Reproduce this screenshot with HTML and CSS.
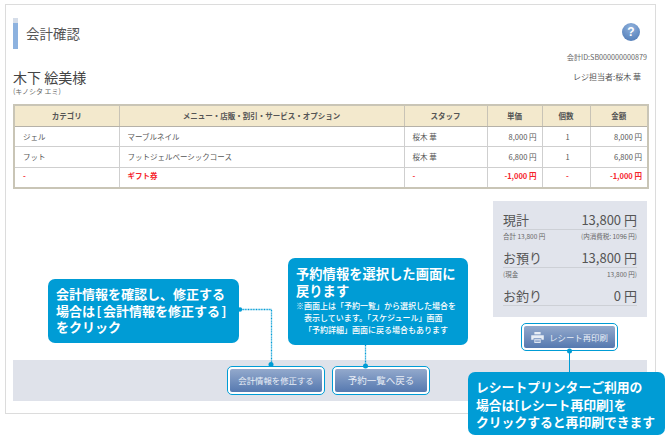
FILE: index.html
```html
<!DOCTYPE html>
<html lang="ja">
<head>
<meta charset="utf-8">
<title>会計確認</title>
<link rel="stylesheet" href="styles.css">
</head>
<body>
<main class="stage">
  <section class="card">
    <header class="head">
      <h1 class="title">会計確認</h1>
      <span class="help">?</span>
    </header>
    <p class="receipt-id">会計ID:SB000000000879</p>
    <div class="customer">
      <div>
        <div class="name">木下 絵美様</div>
        <div class="kana">(キノシタ エミ)</div>
      </div>
      <div class="cashier">レジ担当者:桜木 華</div>
    </div>
    <table class="items">
      <colgroup>
        <col class="c1"><col class="c2"><col class="c3"><col class="c4"><col class="c5"><col class="c6">
      </colgroup>
      <thead>
        <tr><th>カテゴリ</th><th>メニュー・店販・割引・サービス・オプション</th><th>スタッフ</th><th>単価</th><th>個数</th><th>金額</th></tr>
      </thead>
      <tbody>
        <tr><td>ジェル</td><td>マーブルネイル</td><td>桜木 華</td><td class="num">8,000 円</td><td class="mid">1</td><td class="num">8,000 円</td></tr>
        <tr><td>フット</td><td>フットジェルベーシックコース</td><td>桜木 華</td><td class="num">6,800 円</td><td class="mid">1</td><td class="num">6,800 円</td></tr>
        <tr class="red"><td>-</td><td>ギフト券</td><td>-</td><td class="num">-1,000 円</td><td class="mid">-</td><td class="num">-1,000 円</td></tr>
      </tbody>
    </table>
    <aside class="summary">
      <div class="sum-row"><span>現計</span><span>13,800 円</span></div>
      <div class="sum-sub"><span>合計 13,800 円</span><span>(内消費税: 1096 円)</span></div>
      <div class="sum-row"><span>お預り</span><span>13,800 円</span></div>
      <div class="sum-sub"><span>(現金</span><span>13,800 円)</span></div>
      <div class="sum-row last"><span>お釣り</span><span>0 円</span></div>
    </aside>
    <div class="reprint-wrap">
      <span class="ring"><button class="btn btn-print">
        <svg class="printer" viewBox="0 0 16 14" aria-hidden="true"><path d="M4 0h8v3H4z" fill="#e8edf5"/><path d="M0 4h16v6h-3V8H3v2H0z" fill="#e8edf5"/><path d="M4 9h8v5H4z" fill="#e8edf5"/><path d="M5 10.500h6M5 12.200h6" stroke="#5a7db5" stroke-width=".8"/></svg>
        レシート再印刷</button></span>
    </div>
    <footer class="actions">
      <span class="ring"><button class="btn">会計情報を修正する</button></span>
      <span class="ring"><button class="btn btn-wide">予約一覧へ戻る</button></span>
    </footer>
  </section>

  <div class="note note-a">会計情報を確認し、修正する<br>場合は<span class="br">[</span>会計情報を修正する<span class="br">]</span><br>をクリック</div>
  <div class="note note-b">予約情報を選択した画面に<br>戻ります
    <small>※画面上は「予約一覧」から選択した場合を<br><span class="ind">表示しています。「スケジュール」画面</span><br><span class="ind">「予約詳細」画面に戻る場合もあります</span></small>
  </div>
  <div class="note note-c">レシートプリンターご利用の<br>場合は[レシート再印刷]を<br>クリックすると再印刷できます</div>

  <svg class="links" viewBox="0 0 670 438" aria-hidden="true">
    <path d="M240 309.500h31.500V364" fill="none" stroke="#009cd5" stroke-width="1.300" stroke-dasharray="1 .6"/>
    <circle cx="240" cy="309.500" r="2.200" fill="#009cd5"/>
    <circle cx="271" cy="364.500" r="2.500" fill="#009cd5"/>
    <path d="M365.500 345v21" fill="none" stroke="#009cd5" stroke-width="1.300" stroke-dasharray="1 .6"/>
    <circle cx="365.500" cy="366" r="2.500" fill="#009cd5"/>
    <path d="M569.500 351v21" fill="none" stroke="#009cd5"/>
    <circle cx="569.500" cy="351" r="2.500" fill="#009cd5"/>
  </svg>
</main>
</body>
</html>
```
FILE: styles.css
```css
* { box-sizing: border-box; }
html, body { margin: 0; background: #fff; }
body { font-family: "Noto Sans CJK JP", "Liberation Sans", sans-serif; color: #444; }
.stage { position: relative; width: 670px; height: 438px; overflow: hidden; padding: 4px 0 0 5px; }
.card { width: 651px; height: 410px; border: 1px solid #dcdcdc; padding: 13px 8px 0 7px; background: #fff; }
.head { display: flex; justify-content: space-between; align-items: flex-start; height: 31px; }
.title { margin: 0; height: 31px; padding-left: 8px; border-left: 5px solid #8db2df; border-image: linear-gradient(#d5dde9 0 18%, #8db2df 18% 100%) 1; font-size: 13.500px; font-weight: 400; line-height: 31px; color: #555; }
.help { width: 18px; height: 18px; margin: 5px 7px 0 0; border-radius: 50%; background: radial-gradient(circle at 50% 25%, #8fb1dc, #4a76b3); color: #fff; font: 700 12px/18px "Liberation Sans", sans-serif; text-align: center; }
.receipt-id { margin: 2px 0 0; height: 12px; font-size: 7.200px; line-height: 12px; text-align: right; color: #666; }
.customer { display: flex; justify-content: space-between; margin-top: 4px; height: 34px; }
.name { font-size: 14px; line-height: 20px; color: #444; }
.kana { font-size: 7px; line-height: 9px; color: #666; }
.cashier { font-size: 8px; line-height: 12px; padding: 4px 6px 0 0; color: #555; }
.items { width: 634px; height: 85px; margin-top: 3px; border-collapse: collapse; table-layout: fixed; border: 2px solid #c9c5b6; font-size: 7.500px; color: #555; }
.c1 { width: 105px; } .c2 { width: 285px; } .c3 { width: 83px; } .c4 { width: 55px; } .c5 { width: 48px; } .c6 { width: 58px; }
.items th { height: 21px; background: #f3e9cd; border: 1px solid #c8c3b6; border-bottom: 1px solid #b5b1a8; font-weight: 700; color: #555; padding: 0; }
.items td { height: 20px; border: 1px solid #cfcfcf; padding: 0 5px 0 8px; }
.items .num { text-align: right; }
.items .mid { text-align: center; }
.items .red td { color: #f5242c; font-weight: 700; padding-bottom: 3px; }
.summary { margin: 12px 0 0 480px; width: 154px; height: 116px; padding: 10px 10px 0; background: #e1e4ec; color: #555; }
.sum-row { display: flex; justify-content: space-between; height: 19px; border-bottom: 1px solid #cdd0d6; font-size: 13px; line-height: 18px; }
.sum-sub { display: flex; justify-content: space-between; height: 19px; font-size: 6.500px; line-height: 12px; color: #666; }
.reprint-wrap { display: flex; margin: 6px 0 0 508px; height: 28px; width: 97px; }
.ring { display: inline-flex; padding: 2px; border: 1px solid #009cd5; border-radius: 5px; background: #fff; }
.btn { display: flex; align-items: center; justify-content: center; gap: 5px; width: 92px; height: 23px; padding: 0; border: 0; border-radius: 2px; background: linear-gradient(#93a9cc, #5679b0); color: #e9eef6; font: 400 8.400px/21px "Noto Sans CJK JP", sans-serif; }
.btn-print { width: 91px; height: 22px; }
.btn-wide { font-size: 9.500px; }
.printer { width: 13px; height: 11px; }
.actions { display: flex; justify-content: flex-end; gap: 7px; align-items: center; height: 41px; margin-top: 9px; padding-right: 217px; background: #dfe2ea; }
.note { position: absolute; background: #009cd5; color: #fff; font-weight: 700; border-radius: 7px; }
.note-a { left: 48px; top: 279px; width: 191px; height: 64px; padding: 7px 0 0 8px; font-size: 13px; line-height: 16.500px; }
.br { padding: 0 1.500px; }
.note-b { left: 288px; top: 258px; width: 180px; height: 87px; padding: 7px 0 0 8px; font-size: 13.300px; line-height: 17px; }
.note-b small { display: block; font-size: 8px; line-height: 11.800px; margin-top: 1px; font-weight: 500; }
.ind { padding-left: 8px; }
.note-c { left: 468px; top: 372px; width: 197px; height: 63px; padding: 6px 0 0 8px; font-size: 12.800px; line-height: 17.500px; }
.links { position: absolute; left: 0; top: 0; width: 670px; height: 438px; pointer-events: none; }
```
